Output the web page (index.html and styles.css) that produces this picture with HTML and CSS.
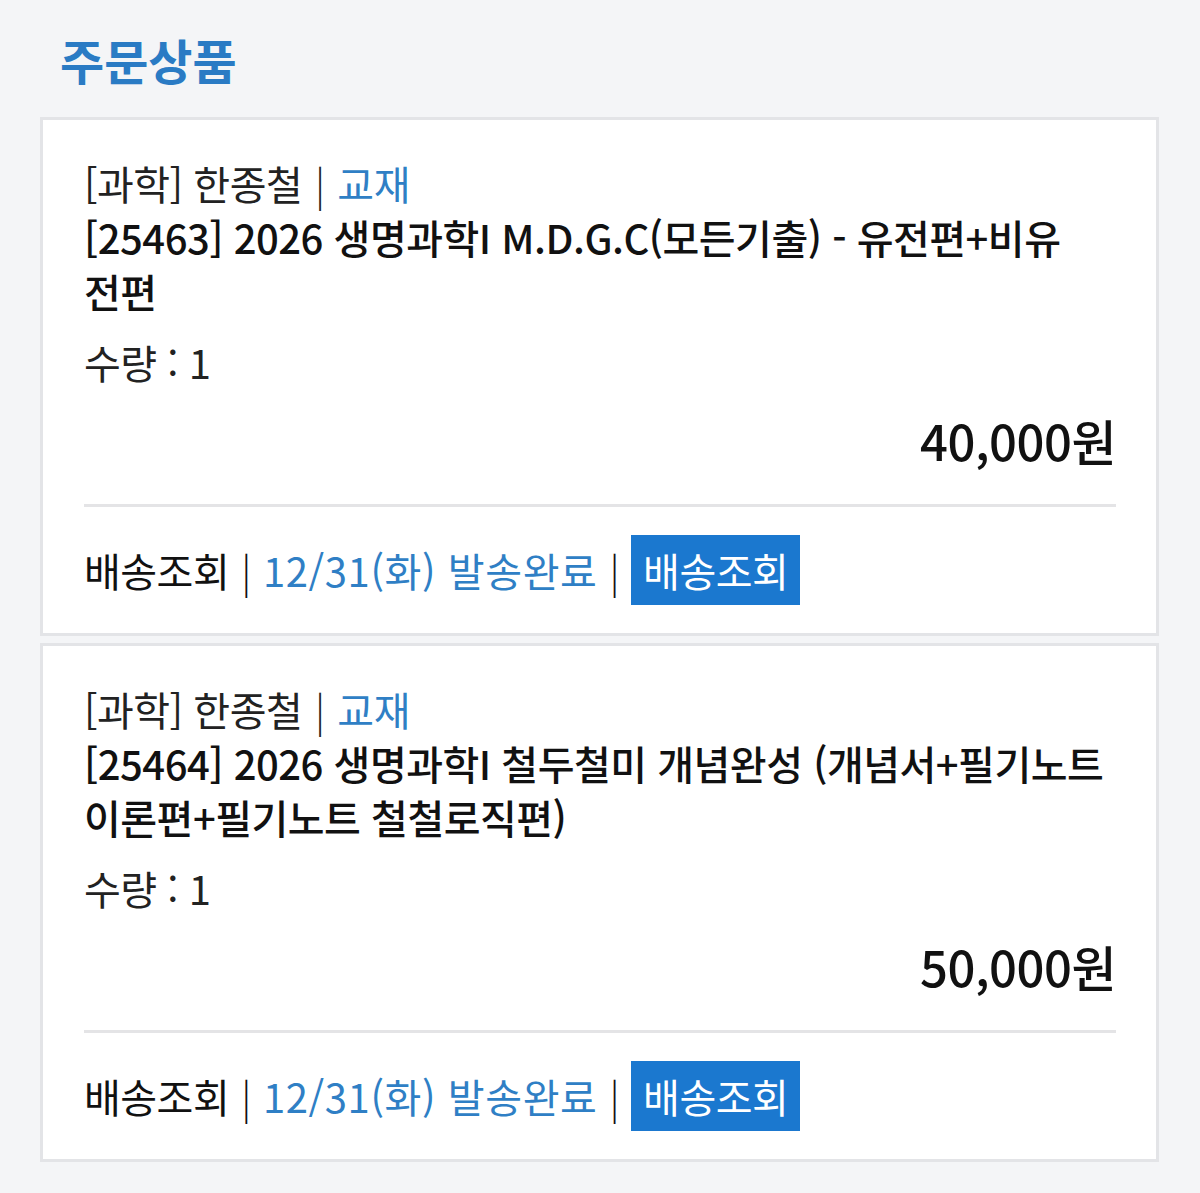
FILE: index.html
```html
<!DOCTYPE html>
<html lang="ko">
<head>
<meta charset="utf-8">
<title>주문상품</title>
<link rel="stylesheet" href="styles.css">
</head>
<body>
<div class="page">
  <h1 class="title">주문상품</h1>
  <div class="list">
    <div class="card">
      <div class="meta">[과학] 한종철 <span class="sep">|</span> <span class="blue">교재</span></div>
      <div class="name">[25463] 2026 생명과학I M.D.G.C(모든기출) - 유전편+비유<br>전편</div>
      <div class="qty">수량 : 1</div>
      <div class="price">40,000원</div>
      <div class="divider"></div>
      <div class="ship">
        <span>배송조회</span><span class="sep">|</span><span class="blue date">12/31(화) 발송완료</span><span class="sep">|</span><span class="btn">배송조회</span>
      </div>
    </div>
    <div class="card">
      <div class="meta">[과학] 한종철 <span class="sep">|</span> <span class="blue">교재</span></div>
      <div class="name">[25464] 2026 생명과학I 철두철미 개념완성 (개념서+필기노트 이론편+필기노트 철철로직편)</div>
      <div class="qty">수량 : 1</div>
      <div class="price">50,000원</div>
      <div class="divider"></div>
      <div class="ship">
        <span>배송조회</span><span class="sep">|</span><span class="blue date">12/31(화) 발송완료</span><span class="sep">|</span><span class="btn">배송조회</span>
      </div>
    </div>
  </div>
</div>
</body>
</html>
```
FILE: styles.css
```css
html, body {
  margin: 0;
  padding: 0;
  background: #f4f5f7;
}
body {
  font-family: "Noto Sans CJK KR", "Noto Sans", sans-serif;
  color: #111;
}
.page {
  padding: 0 41px 0 40px;
}
.title {
  margin: 29px 0 28px 0;
  padding-left: 20px;
  font-size: 48px;
  line-height: 60px;
  font-weight: 700;
  color: #2a7bc4;
}
.list {
  display: flex;
  flex-direction: column;
  gap: 7px;
}
.card {
  background: #fff;
  border: 3px solid #e3e4e7;
  padding: 36px 40px 28px 41px;
  font-size: 40px;
  line-height: 54px;
  letter-spacing: -0.5px;
}
.blue {
  color: #2f7fc5;
}
.meta {
  color: #222;
}
.meta .sep {
  margin: 0 2px;
  font-weight: 300;
}
.name {
  font-weight: 500;
  color: #111;
}
.qty {
  margin-top: 17px;
  color: #222;
}
.price {
  margin-top: 24px;
  text-align: right;
  font-size: 49px;
  font-weight: 500;
  color: #111;
}
.divider {
  margin-top: 37px;
  height: 3px;
  background: #e4e4e6;
}
.ship {
  margin-top: 28px;
  display: flex;
  align-items: center;
  height: 70px;
  color: #111;
}
.ship .sep {
  margin: 0 12px;
  font-weight: 300;
}
.ship .date {
  letter-spacing: 0.6px;
}
.btn {
  display: inline-flex;
  align-items: center;
  height: 70px;
  padding: 0 12px;
  background: #1b78cf;
  color: #fff;
}
```
